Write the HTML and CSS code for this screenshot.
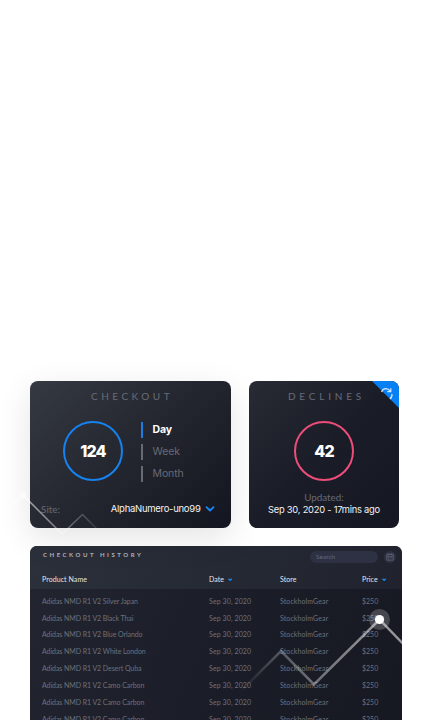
FILE: index.html
```html
<!DOCTYPE html>
<html lang="en">
<head>
<meta charset="utf-8">
<title>Checkout dashboard</title>
<link rel="stylesheet" href="styles.css">
</head>
<body>
<main class="page">
  <div class="cards">
    <section class="card checkout">
      <h2 class="card-title">CHECKOUT</h2>
      <div class="stats">
        <div class="ring">124</div>
        <ul class="periods">
          <li class="active">Day</li>
          <li>Week</li>
          <li>Month</li>
        </ul>
      </div>
      <div class="site">
        <span class="label">Site:</span>
        <span class="site-name">AlphaNumero-uno99</span>
        <svg class="chev" viewBox="0 0 10 6"><path d="M1.5 1.2 5 4.5 8.5 1.2"/></svg>
      </div>
    </section>
    <section class="card declines">
      <svg class="corner" viewBox="0 0 27 27">
        <path class="corner-bg" d="M0 0H27V27Z"/>
        <path class="corner-icon" d="M9.6 11C10.4 8.7 12.5 7.4 14.8 7.8 16.1 8 17.2 8.7 18 10M18.8 7.2V10.6H15.3M19.9 13C20.2 15 19.5 16.8 18 18"/>
      </svg>
      <h2 class="card-title">DECLINES</h2>
      <div class="ring pink">42</div>
      <div class="updated">Updated:</div>
      <div class="stamp">Sep 30, 2020 - 17mins ago</div>
    </section>
  </div>
  <section class="history">
    <header class="head">
      <div class="bar">
        <h2 class="history-title">CHECKOUT HISTORY</h2>
        <div class="search">Search</div>
        <div class="cal"><svg viewBox="0 0 8 8"><path d="M.8 1.4H7.2V7.2H.8ZM.8 3.3H7.2M2.4 .4V2M5.6 .4V2M2.2 4.6H3M3.6 4.6H4.4M5 4.6H5.8M2.2 5.9H3M3.6 5.9H4.4"/></svg></div>
      </div>
      <div class="row cols">
        <span>Product Name</span>
        <span>Date <svg class="sort" viewBox="0 0 4 3"><path d="M.5 .7 2 2.1 3.5 .7"/></svg></span>
        <span>Store</span>
        <span>Price <svg class="sort" viewBox="0 0 4 3"><path d="M.5 .7 2 2.1 3.5 .7"/></svg></span>
      </div>
    </header>
    <div class="rows">
      <div class="row"><span class="name">Adidas NMD R1 V2 Silver Japan</span><span class="date">Sep 30, 2020</span><span class="store">StockholmGear</span><span>$250</span></div>
      <div class="row"><span class="name">Adidas NMD R1 V2 Black Thai</span><span class="date">Sep 30, 2020</span><span class="store">StockholmGear</span><span>$250</span></div>
      <div class="row"><span class="name">Adidas NMD R1 V2 Blue Orlando</span><span class="date">Sep 30, 2020</span><span class="store">StockholmGear</span><span>$250</span></div>
      <div class="row"><span class="name">Adidas NMD R1 V2 White London</span><span class="date">Sep 30, 2020</span><span class="store">StockholmGear</span><span>$250</span></div>
      <div class="row"><span class="name">Adidas NMD R1 V2 Desert Quba</span><span class="date">Sep 30, 2020</span><span class="store">StockholmGear</span><span>$250</span></div>
      <div class="row"><span class="name">Adidas NMD R1 V2 Camo Carbon</span><span class="date">Sep 30, 2020</span><span class="store">StockholmGear</span><span>$250</span></div>
      <div class="row"><span class="name">Adidas NMD R1 V2 Camo Carbon</span><span class="date">Sep 30, 2020</span><span class="store">StockholmGear</span><span>$250</span></div>
      <div class="row"><span class="name">Adidas NMD R1 V2 Camo Carbon</span><span class="date">Sep 30, 2020</span><span class="store">StockholmGear</span><span>$250</span></div>
    </div>
  </section>
  <svg class="lines" viewBox="0 0 432 720">
    <defs>
      <linearGradient id="ga" gradientUnits="userSpaceOnUse" x1="0" y1="0" x2="98" y2="0">
        <stop offset="0" stop-color="#fff" stop-opacity=".3"/><stop offset=".24" stop-color="#fff" stop-opacity=".6"/><stop offset=".6" stop-color="#fff" stop-opacity=".4"/><stop offset="1" stop-color="#fff" stop-opacity=".1"/>
      </linearGradient>
      <linearGradient id="gb" gradientUnits="userSpaceOnUse" x1="240" y1="0" x2="380" y2="0">
        <stop offset="0" stop-color="#fff" stop-opacity="0"/><stop offset=".3" stop-color="#fff" stop-opacity=".27"/><stop offset=".55" stop-color="#fff" stop-opacity=".38"/><stop offset="1" stop-color="#fff" stop-opacity=".55"/>
      </linearGradient>
    </defs>
    <path d="M0 517 23 495 62 534 82.5 514.5 97 529" fill="none" stroke="url(#ga)" stroke-width="1.5"/>
    <circle cx="23" cy="495" r="3.5" fill="#fff" opacity=".45"/>
    <path d="M240 692 281 651 314 684.5 379.5 619.5 411 652" fill="none" stroke="url(#gb)" stroke-width="2.5"/>
    <circle cx="379.5" cy="619.5" r="10.5" fill="#fff" opacity=".2"/>
    <circle cx="379.5" cy="619.5" r="4.6" fill="#fff"/>
  </svg>
</main>
</body>
</html>
```
FILE: styles.css
```css
* { box-sizing: border-box; }
body { margin: 0; background: #fff; font-family: Lato, "Liberation Sans", sans-serif; }
h2, ul { margin: 0; padding: 0; font-weight: 400; }
ul { list-style: none; }
.page { position: relative; width: 432px; height: 720px; padding: 381px 30px 0; overflow: hidden; }
.cards { display: flex; gap: 18.5px; height: 147px; }
.card { height: 146.6px; border-radius: 8px; position: relative; overflow: hidden; }
.checkout { width: 200.5px; background: linear-gradient(135deg, #353942 0%, #24272f 48%, #131620 100%); box-shadow: 0 10px 34px rgba(0,0,0,.11); padding-left: 11px; overflow: visible; }
.declines { width: 150px; background: linear-gradient(135deg, #282b34, #1a1d27 50%, #151823); display: flex; flex-direction: column; align-items: center; }
.card-title { font-size: 10px; line-height: 12px; padding-top: 9px; height: 40px; letter-spacing: 3.5px; color: #696b79; }
.checkout .card-title { padding-left: 50px; }
.declines .card-title { padding-left: 5px; letter-spacing: 3.8px; }
.stats { display: flex; padding-left: 22px; height: 72px; }
.ring { width: 60px; height: 60px; flex: none; border: 2px solid #1682ef; border-radius: 50%; display: flex; align-items: center; justify-content: center; color: #fff; font-family: Inter, sans-serif; font-weight: 800; font-size: 16px; letter-spacing: -.8px; }
.pink { border-color: #ee4d79; }
.periods { margin-left: 18px; padding-top: .5px; display: flex; flex-direction: column; gap: 6px; font-family: Inter, sans-serif; }
.periods li { height: 16px; line-height: 16px; border-left: 2px solid #676974; padding-left: 9.5px; font-size: 10.5px; letter-spacing: -.1px; color: #686a76; }
.periods .active { color: #fff; font-weight: 700; border-color: #1b7de4; }
.site { display: flex; align-items: center; height: 16px; margin-top: 8px; font-size: 10px; line-height: 16px; }
.label, .updated { color: #686a76; }
.site-name { color: #f2f2f4; margin-left: auto; font-family: Inter, sans-serif; font-size: 9.5px; letter-spacing: -.28px; }
.chev { width: 10px; height: 6px; margin: 0 16px 0 4px; }
.chev path { fill: none; stroke: #1688fa; stroke-width: 1.8; stroke-linecap: round; stroke-linejoin: round; }
.updated { font-size: 9.8px; line-height: 12px; margin-top: 9.5px; }
.stamp { font-family: Inter, sans-serif; font-size: 9.3px; letter-spacing: -.22px; line-height: 13px; color: #f2f2f4; white-space: nowrap; }
.corner { position: absolute; right: 0; top: 0; width: 27px; height: 27px; }
.corner-bg { fill: #0780f4; }
.corner-icon { fill: none; stroke: #d5eaff; stroke-width: 1.2; }
.history { width: 372px; height: 174px; margin-top: 18px; border-radius: 7px 7px 0 0; overflow: hidden; background: linear-gradient(115deg, #232630, #1b1e28 50%, #161822); }
.head { height: 43px; background: linear-gradient(110deg, #2b303b, #20232e); }
.bar { display: flex; height: 24px; align-items: flex-start; padding: 5px 6px 0 13px; }
.history-title { font-size: 6px; line-height: 8px; letter-spacing: 2.55px; color: #b2b4bd; font-weight: 700; }
.search { margin-left: auto; width: 68px; height: 12px; border-radius: 6px; background: #2d3143; color: #666a79; font-size: 6.5px; line-height: 12px; padding-left: 6px; }
.cal { width: 12px; height: 12px; margin-left: 6px; border-radius: 50%; background: #2d3143; display: flex; align-items: center; justify-content: center; }
.cal svg { width: 8px; height: 8px; }
.cal path { fill: none; stroke: #686b7b; stroke-width: .7; }
.row { display: grid; grid-template-columns: 167px 71px 82px 1fr; padding-left: 12px; height: 16.83px; line-height: 16.83px; font-size: 7px; color: #6d707d; white-space: nowrap; }
.row > span { justify-self: start; }
.row .name { letter-spacing: -.07px; }
.row .date { letter-spacing: .1px; }
.row .store { letter-spacing: .1px; }
.cols { color: #e4e5e8; height: 18px; line-height: 18px; letter-spacing: .07px; }
.sort { width: 4.4px; height: 3.3px; margin: 0 0 1px 2px; }
.sort path { fill: none; stroke: #1488ee; stroke-width: 1.3; }
.rows { padding-top: 3.8px; }
.lines { position: absolute; left: 0; top: 0; width: 432px; height: 720px; pointer-events: none; }
```
